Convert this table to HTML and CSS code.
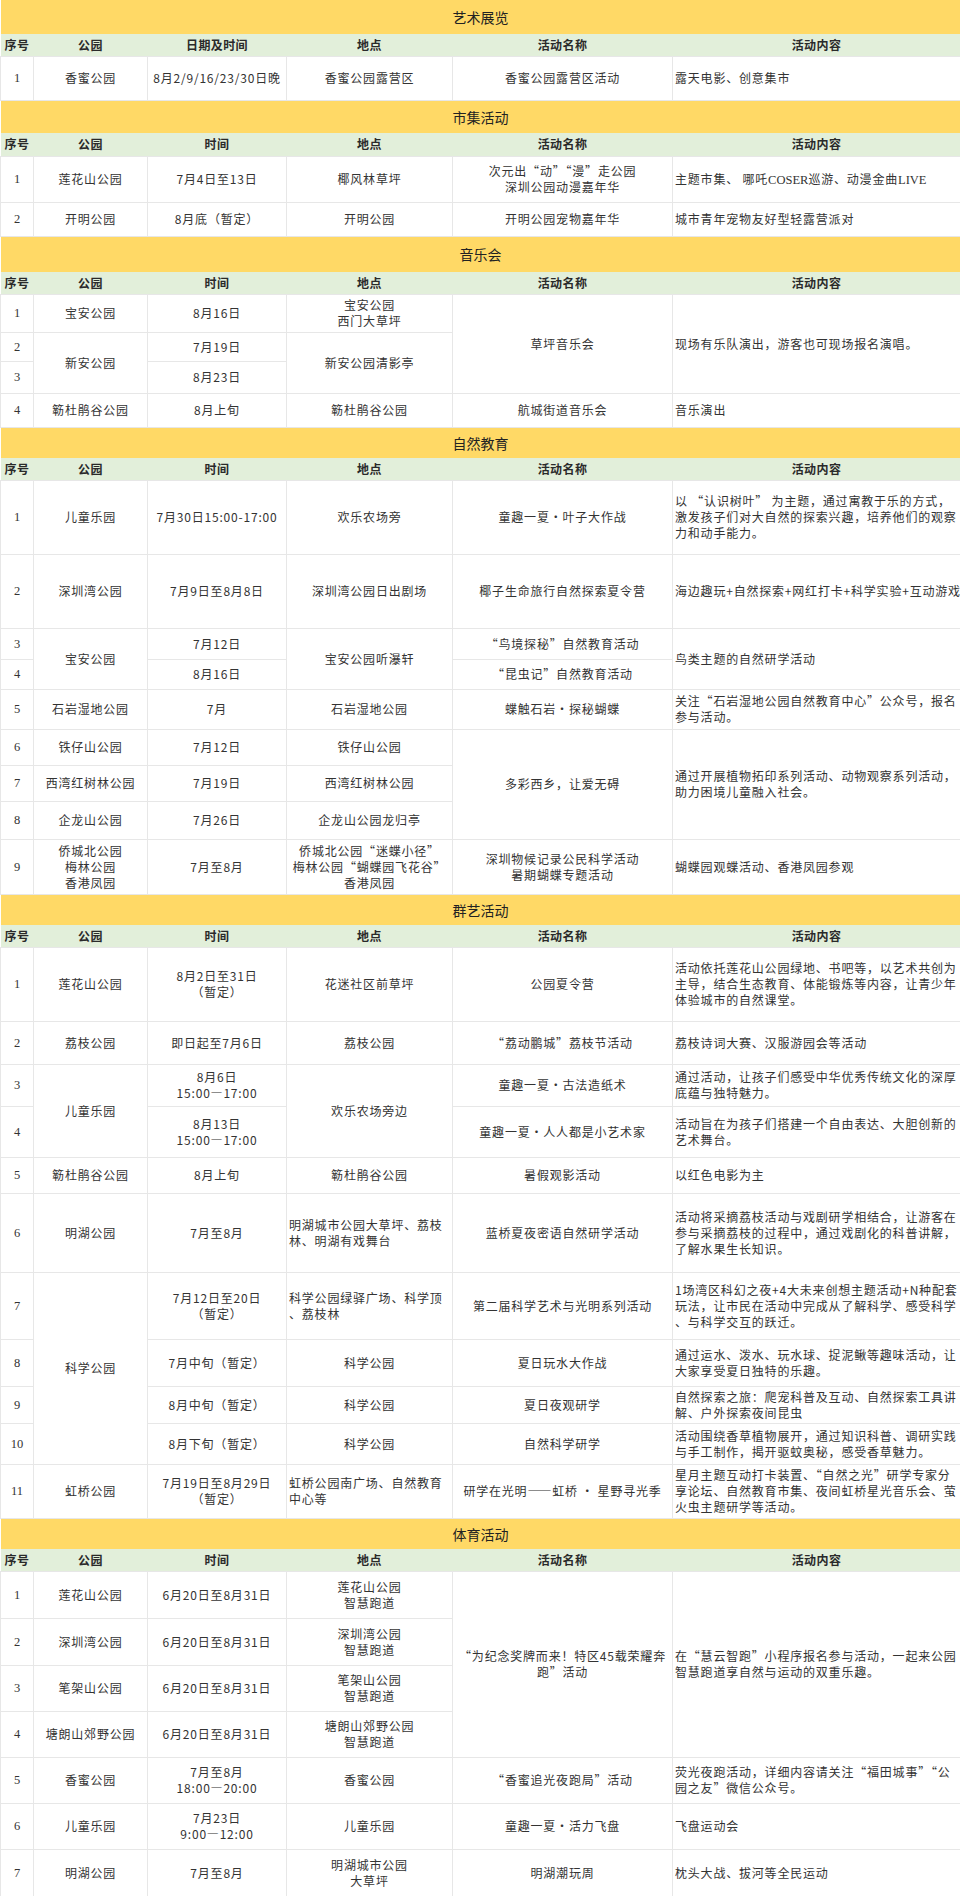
FILE: index.html
```html
<!DOCTYPE html>
<html lang="zh-CN">
<head>
<meta charset="utf-8">
<title>活动一览</title>
<link rel="stylesheet" href="styles.css">
</head>
<body>
<table class="sheet">
  <colgroup>
    <col class="c-no"><col class="c-park"><col class="c-time"><col class="c-place"><col class="c-name"><col class="c-desc">
  </colgroup>
  <tbody>
    <!-- 艺术展览 -->
    <tr class="h34"><td colspan="6" class="title">艺术展览</td></tr>
    <tr class="h22 head"><th>序号</th><th>公园</th><th>日期及时间</th><th>地点</th><th>活动名称</th><th>活动内容</th></tr>
    <tr class="h44"><td class="no">1</td><td>香蜜公园</td><td>8月2/9/16/23/30日晚</td><td>香蜜公园露营区</td><td>香蜜公园露营区活动</td><td class="l">露天电影、创意集市</td></tr>

    <!-- 市集活动 -->
    <tr class="h33"><td colspan="6" class="title">市集活动</td></tr>
    <tr class="h23 head"><th>序号</th><th>公园</th><th>时间</th><th>地点</th><th>活动名称</th><th>活动内容</th></tr>
    <tr class="h46"><td class="no">1</td><td>莲花山公园</td><td>7月4日至13日</td><td>椰风林草坪</td><td>次元出“动”“漫”走公园<br>深圳公园动漫嘉年华</td><td class="l">主题市集、 哪吒<span class="lat">COSER</span>巡游、动漫金曲<span class="lat">LIVE</span></td></tr>
    <tr class="h34"><td class="no">2</td><td>开明公园</td><td>8月底（暂定）</td><td>开明公园</td><td>开明公园宠物嘉年华</td><td class="l">城市青年宠物友好型轻露营派对</td></tr>

    <!-- 音乐会 -->
    <tr class="h36"><td colspan="6" class="title">音乐会</td></tr>
    <tr class="h22 head"><th>序号</th><th>公园</th><th>时间</th><th>地点</th><th>活动名称</th><th>活动内容</th></tr>
    <tr class="h38"><td class="no">1</td><td>宝安公园</td><td>8月16日</td><td>宝安公园<br>西门大草坪</td><td rowspan="3">草坪音乐会</td><td rowspan="3" class="l">现场有乐队演出，游客也可现场报名演唱。</td></tr>
    <tr class="h29"><td class="no">2</td><td rowspan="2">新安公园</td><td>7月19日</td><td rowspan="2">新安公园清影亭</td></tr>
    <tr class="h32"><td class="no">3</td><td>8月23日</td></tr>
    <tr class="h34"><td class="no">4</td><td>簕杜鹃谷公园</td><td>8月上旬</td><td>簕杜鹃谷公园</td><td>航城街道音乐会</td><td class="l">音乐演出</td></tr>

    <!-- 自然教育 -->
    <tr class="h31"><td colspan="6" class="title">自然教育</td></tr>
    <tr class="h22 head"><th>序号</th><th>公园</th><th>时间</th><th>地点</th><th>活动名称</th><th>活动内容</th></tr>
    <tr class="h74"><td class="no">1</td><td>儿童乐园</td><td>7月30日15:00-17:00</td><td>欢乐农场旁</td><td>童趣一夏·叶子大作战</td><td class="l">以 “认识树叶” 为主题，通过寓教于乐的方式，<br>激发孩子们对大自然的探索兴趣，培养他们的观察<br>力和动手能力。</td></tr>
    <tr class="h74"><td class="no">2</td><td>深圳湾公园</td><td>7月9日至8月8日</td><td>深圳湾公园日出剧场</td><td>椰子生命旅行自然探索夏令营</td><td class="l">海边趣玩+自然探索+网红打卡+科学实验+互动游戏</td></tr>
    <tr class="h31"><td class="no">3</td><td rowspan="2">宝安公园</td><td>7月12日</td><td rowspan="2">宝安公园听瀑轩</td><td>“鸟境探秘”自然教育活动</td><td rowspan="2" class="l">鸟类主题的自然研学活动</td></tr>
    <tr class="h30"><td class="no">4</td><td>8月16日</td><td>“昆虫记”自然教育活动</td></tr>
    <tr class="h40"><td class="no">5</td><td>石岩湿地公园</td><td>7月</td><td>石岩湿地公园</td><td>蝶触石岩·探秘蝴蝶</td><td class="l">关注“石岩湿地公园自然教育中心”公众号，报名<br>参与活动。</td></tr>
    <tr class="h36"><td class="no">6</td><td>铁仔山公园</td><td>7月12日</td><td>铁仔山公园</td><td rowspan="3">多彩西乡，让爱无碍</td><td rowspan="3" class="l">通过开展植物拓印系列活动、动物观察系列活动，<br>助力困境儿童融入社会。</td></tr>
    <tr class="h36"><td class="no">7</td><td>西湾红树林公园</td><td>7月19日</td><td>西湾红树林公园</td></tr>
    <tr class="h38"><td class="no">8</td><td>企龙山公园</td><td>7月26日</td><td>企龙山公园龙归亭</td></tr>
    <tr class="h55"><td class="no">9</td><td>侨城北公园<br>梅林公园<br>香港凤园</td><td>7月至8月</td><td>侨城北公园“迷蝶小径”<br>梅林公园“蝴蝶园飞花谷”<br>香港凤园</td><td>深圳物候记录公民科学活动<br>暑期蝴蝶专题活动</td><td class="l">蝴蝶园观蝶活动、香港凤园参观</td></tr>

    <!-- 群艺活动 -->
    <tr class="h31"><td colspan="6" class="title">群艺活动</td></tr>
    <tr class="h22 head"><th>序号</th><th>公园</th><th>时间</th><th>地点</th><th>活动名称</th><th>活动内容</th></tr>
    <tr class="h74"><td class="no">1</td><td>莲花山公园</td><td>8月2日至31日<br>（暂定）</td><td>花迷社区前草坪</td><td>公园夏令营</td><td class="l">活动依托莲花山公园绿地、书吧等，以艺术共创为<br>主导，结合生态教育、体能锻炼等内容，让青少年<br>体验城市的自然课堂。</td></tr>
    <tr class="h43"><td class="no">2</td><td>荔枝公园</td><td>即日起至7月6日</td><td>荔枝公园</td><td>“荔动鹏城”荔枝节活动</td><td class="l">荔枝诗词大赛、汉服游园会等活动</td></tr>
    <tr class="h42"><td class="no">3</td><td rowspan="2">儿童乐园</td><td>8月6日<br>15:00—17:00</td><td rowspan="2">欢乐农场旁边</td><td>童趣一夏·古法造纸术</td><td class="l">通过活动，让孩子们感受中华优秀传统文化的深厚<br>底蕴与独特魅力。</td></tr>
    <tr class="h51"><td class="no">4</td><td>8月13日<br>15:00—17:00</td><td>童趣一夏·人人都是小艺术家</td><td class="l">活动旨在为孩子们搭建一个自由表达、大胆创新的<br>艺术舞台。</td></tr>
    <tr class="h36"><td class="no">5</td><td>簕杜鹃谷公园</td><td>8月上旬</td><td>簕杜鹃谷公园</td><td>暑假观影活动</td><td class="l">以红色电影为主</td></tr>
    <tr class="h79"><td class="no">6</td><td>明湖公园</td><td>7月至8月</td><td class="l">明湖城市公园大草坪、荔枝<br>林、明湖有戏舞台</td><td>蓝桥夏夜密语自然研学活动</td><td class="l">活动将采摘荔枝活动与戏剧研学相结合，让游客在<br>参与采摘荔枝的过程中，通过戏剧化的科普讲解，<br>了解水果生长知识。</td></tr>
    <tr class="h67"><td class="no">7</td><td rowspan="4">科学公园</td><td>7月12日至20日<br>（暂定）</td><td class="l">科学公园绿驿广场、科学顶<br>、荔枝林</td><td>第二届科学艺术与光明系列活动</td><td class="l">1场湾区科幻之夜+4大未来创想主题活动+N种配套<br>玩法，让市民在活动中完成从了解科学、感受科学<br>、与科学交互的跃迁。</td></tr>
    <tr class="h47"><td class="no">8</td><td>7月中旬（暂定）</td><td>科学公园</td><td>夏日玩水大作战</td><td class="l">通过运水、泼水、玩水球、捉泥鳅等趣味活动，让<br>大家享受夏日独特的乐趣。</td></tr>
    <tr class="h37"><td class="no">9</td><td>8月中旬（暂定）</td><td>科学公园</td><td>夏日夜观研学</td><td class="l">自然探索之旅：爬宠科普及互动、自然探索工具讲<br>解、户外探索夜间昆虫</td></tr>
    <tr class="h41"><td class="no">10</td><td>8月下旬（暂定）</td><td>科学公园</td><td>自然科学研学</td><td class="l">活动围绕香草植物展开，通过知识科普、调研实践<br>与手工制作，揭开驱蚊奥秘，感受香草魅力。</td></tr>
    <tr class="h54"><td class="no">11</td><td>虹桥公园</td><td>7月19日至8月29日<br>（暂定）</td><td class="l">虹桥公园南广场、自然教育<br>中心等</td><td>研学在光明——虹桥 · 星野寻光季</td><td class="l">星月主题互动打卡装置、“自然之光”研学专家分<br>享论坛、自然教育市集、夜间虹桥星光音乐会、萤<br>火虫主题研学等活动。</td></tr>

    <!-- 体育活动 -->
    <tr class="h31"><td colspan="6" class="title">体育活动</td></tr>
    <tr class="h22 head"><th>序号</th><th>公园</th><th>时间</th><th>地点</th><th>活动名称</th><th>活动内容</th></tr>
    <tr class="h47"><td class="no">1</td><td>莲花山公园</td><td>6月20日至8月31日</td><td>莲花山公园<br>智慧跑道</td><td rowspan="4">“为纪念奖牌而来！特区45载荣耀奔<br>跑”活动</td><td rowspan="4" class="l">在“慧云智跑”小程序报名参与活动，一起来公园<br>智慧跑道享自然与运动的双重乐趣。</td></tr>
    <tr class="h47"><td class="no">2</td><td>深圳湾公园</td><td>6月20日至8月31日</td><td>深圳湾公园<br>智慧跑道</td></tr>
    <tr class="h46"><td class="no">3</td><td>笔架山公园</td><td>6月20日至8月31日</td><td>笔架山公园<br>智慧跑道</td></tr>
    <tr class="h46"><td class="no">4</td><td>塘朗山郊野公园</td><td>6月20日至8月31日</td><td>塘朗山郊野公园<br>智慧跑道</td></tr>
    <tr class="h46"><td class="no">5</td><td>香蜜公园</td><td>7月至8月<br>18:00—20:00</td><td>香蜜公园</td><td>“香蜜追光夜跑局”活动</td><td class="l">荧光夜跑活动，详细内容请关注“福田城事”“公<br>园之友”微信公众号。</td></tr>
    <tr class="h46"><td class="no">6</td><td>儿童乐园</td><td>7月23日<br>9:00—12:00</td><td>儿童乐园</td><td>童趣一夏·活力飞盘</td><td class="l">飞盘运动会</td></tr>
    <tr class="h47"><td class="no">7</td><td>明湖公园</td><td>7月至8月</td><td>明湖城市公园<br>大草坪</td><td>明湖潮玩周</td><td class="l">枕头大战、拔河等全民运动</td></tr>
  </tbody>
</table>
</body>
</html>
```

FILE: styles.css
```css
html, body {
  margin: 0;
  padding: 0;
  background: #ffffff;
}

body {
  font-family: "Noto Sans CJK SC", "Noto Sans", sans-serif;
  color: #333333;
  width: 960px;
}

.sheet {
  width: 960px;
  table-layout: fixed;
  border-collapse: collapse;
  border-spacing: 0;
}

.c-no { width: 33px; }
.c-park { width: 114px; }
.c-time { width: 139px; }
.c-place { width: 166px; }
.c-name { width: 220px; }
.c-desc { width: 288px; }

.sheet td {
  border: 1px solid #e7e7e7;
  padding: 0 2px;
  font-size: 12px;
  line-height: 16px;
  letter-spacing: 0.8px;
  text-align: center;
  vertical-align: middle;
  white-space: nowrap;
  overflow: visible;
}

.sheet td.l {
  text-align: left;
}

.sheet td.no {
  font-family: "Liberation Serif", "Noto Sans CJK SC", serif;
  letter-spacing: 0;
  font-size: 12.5px;
  padding: 0;
}

.sheet td.title {
  background: #ffd966;
  border: none;
  font-size: 14px;
  letter-spacing: 0;
  color: #222222;
  text-align: center;
}

.head th {
  background: #e2efda;
  border: none;
  padding: 0;
  font-size: 12px;
  line-height: 16px;
  letter-spacing: 0.4px;
  font-weight: bold;
  color: #2a2a2a;
  text-align: center;
  vertical-align: middle;
  white-space: nowrap;
}

.lat {
  font-family: "Liberation Serif", serif;
  letter-spacing: 0;
  font-size: 12.5px;
}

.h22 { height: 22px; }
.h23 { height: 23px; }
.h29 { height: 29px; }
.h30 { height: 30px; }
.h31 { height: 31px; }
.h32 { height: 32px; }
.h33 { height: 33px; }
.h34 { height: 34px; }
.h36 { height: 36px; }
.h37 { height: 37px; }
.h38 { height: 38px; }
.h40 { height: 40px; }
.h41 { height: 41px; }
.h42 { height: 42px; }
.h43 { height: 43px; }
.h44 { height: 44px; }
.h46 { height: 46px; }
.h47 { height: 47px; }
.h51 { height: 51px; }
.h54 { height: 54px; }
.h55 { height: 55px; }
.h67 { height: 67px; }
.h74 { height: 74px; }
.h79 { height: 79px; }
```
